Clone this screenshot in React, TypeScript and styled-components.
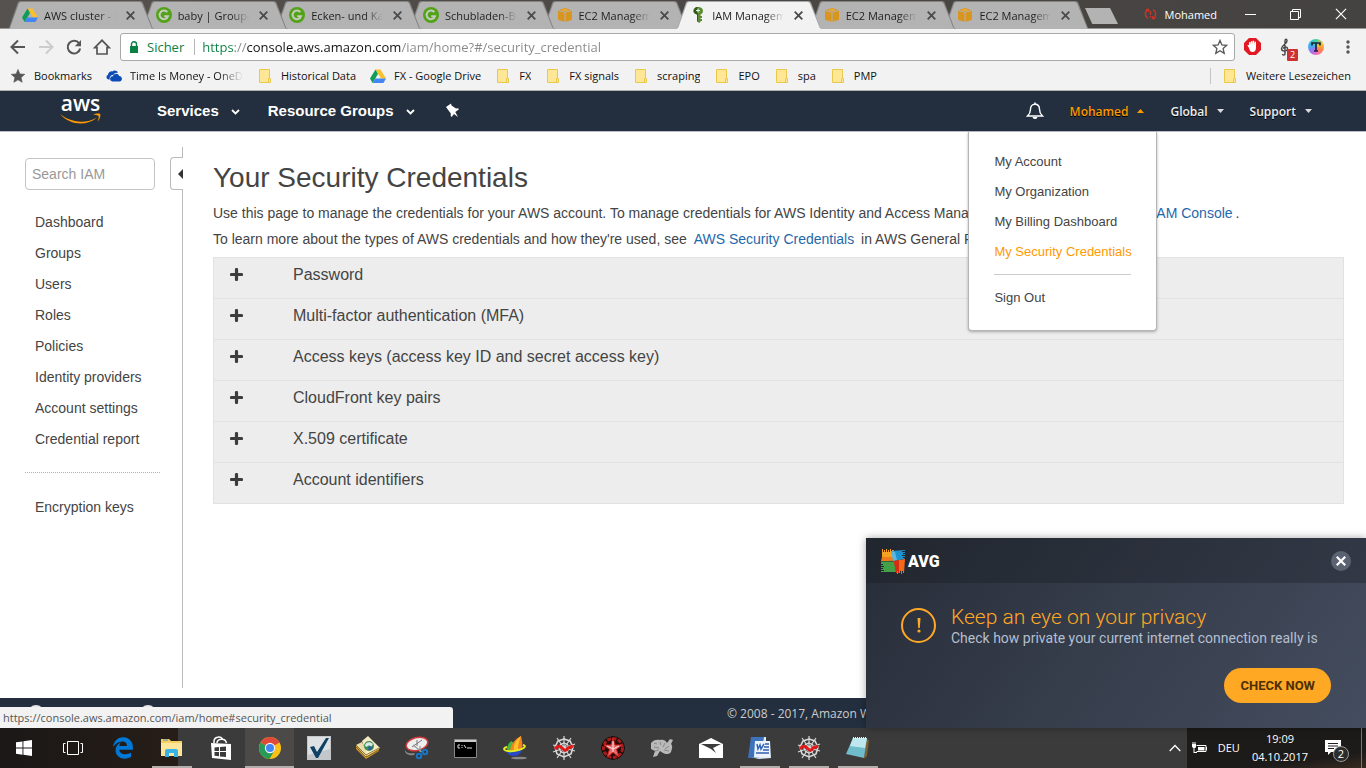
import React from 'react';
import styled, { createGlobalStyle, css } from 'styled-components';
import { FaEdgeLegacy } from 'react-icons/fa6';

const uiFont = '"Open Sans", "Noto Sans", sans-serif';
const pageFont = '"Liberation Sans", Arial, sans-serif';

const GlobalStyle = createGlobalStyle`
  *, *::before, *::after { box-sizing: border-box; }
  body { margin: 0; background: #fff; font-family: ${pageFont}; }
  button { font: inherit; color: inherit; background: none; border: 0; padding: 0; cursor: pointer; }
  a { color: inherit; text-decoration: none; }
  svg { display: block; flex: none; }
`;

const Screen = styled.div`
  min-height: 100vh;
  display: flex;
  flex-direction: column;
  overflow: hidden;
`;

/* ---------- Browser frame ---------- */

const TabStrip = styled.div`
  display: flex;
  height: 29px;
  padding: 1px 0 0 7px;
  background: linear-gradient(90deg, #55524f, #4a4744 50%, #454341);
  font: 11px ${uiFont};
  border-bottom: 1px solid #989694;
`;

const Tabs = styled.div`
  display: flex;
  flex: 0 1 1083px;
  min-width: 0;
  padding-right: 14px;
`;

const tabShape = css`
  content: '';
  position: absolute;
  inset: 0;
  z-index: -1;
  clip-path: polygon(0 100%, 2px 96%, 11px 4%, 13px 0, calc(100% - 14px) 0, calc(100% - 12px) 4%, calc(100% - 2px) 96%, 100% 100%);
`;

const Tab = styled.div<{ $active?: boolean; $order: number }>`
  position: relative;
  z-index: ${p => (p.$active ? 20 : 10 - p.$order)};
  display: flex;
  align-items: center;
  flex: 1 1 0;
  min-width: 0;
  height: 28px;
  margin-right: -14px;
  padding: 0 20px 0 15px;
  color: ${p => (p.$active ? '#222' : '#1f1f1f')};
  &::before { ${tabShape} background: ${p => (p.$active ? '#a8a8a8' : '#858381')}; }
  &::after { ${tabShape} inset: 1px 1px 0; background: ${p => (p.$active ? '#f2f2f2' : '#b3b3b3')}; }
`;

const TabTitle = styled.span`
  flex: 1;
  margin-left: 6px;
  overflow: hidden;
  white-space: nowrap;
  mask-image: linear-gradient(90deg, #000 75%, transparent);
`;

const TabClose = styled.button`
  display: flex;
  margin-left: 10px;
`;

const NewTab = styled.button`
  width: 33px;
  height: 16px;
  margin: 7px 0 0 -5px;
  background: #b3b3b3;
  clip-path: polygon(0 0, 76% 0, 100% 100%, 22% 100%);
`;

const WindowBar = styled.div`
  display: flex;
  align-items: center;
  height: 26px;
  margin-left: auto;
  padding-right: 19px;
  color: #fff;
`;

const ProfileName = styled.button`
  margin: 0 28px 0 8px;
  font: 11px ${uiFont};
`;

const WindowControls = styled.div`
  display: flex;
  gap: 34px;
`;

const Toolbar = styled.div`
  display: flex;
  align-items: center;
  height: 35px;
  padding: 0 9px;
  background: #f2f2f2;
`;

const NavButtons = styled.div`
  display: flex;
  align-items: center;
  gap: 10px;
  margin-right: 9px;
`;

const IconButton = styled.button`
  display: flex;
  align-items: center;
`;

const AddressBar = styled.form`
  display: flex;
  align-items: center;
  flex: 1;
  height: 28px;
  padding: 0 6px 0 8px;
  border: 1px solid #a9a9a9;
  border-radius: 3px;
  background: #fff;
  font: 13px ${uiFont};
`;

const Secure = styled.span`
  margin-left: 8px;
  padding-right: 10px;
  border-right: 1px solid #b5b5b5;
  color: #0b8043;
  line-height: 16px;
`;

const UrlInput = styled.input`
  flex: 1;
  min-width: 0;
  margin-left: 7px;
  padding: 0;
  border: 0;
  outline: 0;
  font: 13px ${uiFont};
  color: #222;
  -webkit-text-fill-color: transparent;
  background: linear-gradient(90deg, #0b8043 31px, #888 31px, #888 45px, #111 45px, #111 199px, #888 199px);
  -webkit-background-clip: text;
  background-clip: text;
`;

const Extensions = styled.div`
  display: flex;
  align-items: center;
  gap: 15px;
  margin-left: 9px;
`;

const ExtensionBadge = styled.span`
  position: absolute;
  right: -5px;
  bottom: -5px;
  width: 11px;
  height: 12px;
  border-radius: 1px;
  background: #d03030;
  color: #fff;
  font: 9px/12px ${uiFont};
  text-align: center;
`;

const BadgedButton = styled(IconButton)`
  position: relative;
`;

const HueButton = styled(IconButton)`
  width: 16px;
  height: 16px;
  border-radius: 50%;
  background: conic-gradient(#3fd0a0, #f4c63a 60deg, #ff8a3c 110deg, #f46cae 170deg, #a870f0 220deg, #35b6f2 290deg, #3fd0a0);
`;

const BookmarkBar = styled.nav`
  display: flex;
  align-items: center;
  height: 27px;
  padding: 0 15px 3px 10px;
  background: #f2f2f2;
  border-bottom: 1px solid #b0b0b0;
  font: 11px ${uiFont};
  color: #111;
`;

const Bookmark = styled.a<{ $width?: number }>`
  display: flex;
  align-items: center;
  gap: 8px;
  margin-right: 14px;
  white-space: nowrap;
  width: ${p => (p.$width ? `${p.$width}px` : 'auto')};
  overflow: hidden;
  ${p => p.$width && 'mask-image: linear-gradient(90deg, #000 82%, transparent);'}
`;

const OtherBookmarks = styled.div`
  margin-left: auto;
  padding-left: 11px;
  border-left: 1px solid #c4c4c4;
  ${Bookmark} { margin: 0; }
`;

/* ---------- AWS console header ---------- */

const ConsoleHeader = styled.header`
  display: flex;
  align-items: stretch;
  height: 41px;
  padding: 0 41px 0 60px;
  background: #232f3e;
  border-bottom: 1px solid #b9bec8;
  color: #fff;
`;

const AwsLogo = styled.a`
  width: 41px;
  margin-right: 56px;
  padding-top: 2px;
  font: 600 21px/20px "Open Sans", sans-serif;
  text-align: center;
`;

const ServiceButton = styled.button`
  display: flex;
  align-items: center;
  gap: 12px;
  margin-right: 28px;
  padding-bottom: 1px;
  font: bold 15px ${pageFont};
`;

const HeaderRight = styled.div`
  display: flex;
  align-items: stretch;
  margin-left: auto;
`;

const AccountItem = styled.div`
  position: relative;
  display: flex;
`;

const AccountButton = styled.button<{ $open?: boolean }>`
  display: flex;
  align-items: center;
  gap: 9px;
  padding: 0 13px;
  font: 600 12px ${uiFont};
  color: ${p => (p.$open ? '#f90' : '#eee')};
  text-shadow: 0 1px 0 #000;
`;

const BellButton = styled.button`
  display: flex;
  align-items: center;
  margin-right: 13px;
`;

const AccountMenu = styled.div`
  position: absolute;
  top: 41px;
  right: 0;
  z-index: 5;
  width: 189px;
  padding: 15px 25px 17px;
  background: #fff;
  border: 1px solid #b5b5b5;
  border-top: 0;
  border-radius: 0 0 4px 4px;
  box-shadow: 0 1px 3px rgba(0, 0, 0, 0.3);
  font-size: 13px;
  line-height: 30px;
  color: #444;
`;

const MenuLink = styled.a<{ $current?: boolean }>`
  display: block;
  white-space: nowrap;
  color: ${p => (p.$current ? '#f90' : '#444')};
`;

const MenuRule = styled.hr`
  margin: 7px 0 8px;
  border: 0;
  border-top: 1px solid #ccc;
`;

/* ---------- Page body ---------- */

const Body = styled.div`
  display: flex;
  flex: 1;
  color: #444;
`;

const Sidebar = styled.aside`
  position: relative;
  flex: none;
  width: 183px;
  margin: 15px 0 10px;
  padding: 11px 22px 0 25px;
  border-right: 1px solid #bbb;
  font-size: 14px;
`;

const SearchInput = styled.input`
  display: block;
  width: 130px;
  height: 32px;
  padding: 0 6px;
  border: 1px solid #c4c4c4;
  border-radius: 4px;
  font: 14px ${pageFont};
  &::placeholder { color: #999; }
`;

const CollapseHandle = styled.button`
  position: absolute;
  top: 10px;
  right: -1px;
  display: flex;
  align-items: center;
  justify-content: flex-end;
  width: 13px;
  height: 33px;
  border: 1px solid #bbb;
  border-right: 0;
  border-radius: 4px 0 0 4px;
  background: #fff;
`;

const SideList = styled.ul`
  list-style: none;
  margin: 17px 0 0;
  padding: 0 0 17px 10px;
  line-height: 31px;
  & + & {
    margin: 0;
    padding-top: 19px;
    border-top: 1px dotted #b0b0b0;
  }
`;

const Content = styled.main`
  flex: 1;
  min-width: 0;
  padding: 29px 22px 0 30px;
`;

const Title = styled.h1`
  margin: 0 0 5px;
  font-size: 28px;
  font-weight: normal;
  line-height: 34px;
`;

const Intro = styled.p`
  margin: 0;
  font-size: 14px;
  line-height: 26px;
  white-space: nowrap;
`;

const TextLink = styled.a`
  margin: 0 3px;
  color: #1f68ac;
`;

const Accordion = styled.div`
  margin-top: 5px;
  border: 1px solid #e2e2e2;
  border-top: 0;
  background: #ededed;
`;

const AccordionRow = styled.button`
  display: flex;
  align-items: flex-start;
  gap: 50px;
  width: 100%;
  padding: 7px 16px 13px;
  border-top: 1px solid #e2e2e2;
  font-size: 16px;
  line-height: 20px;
  text-align: left;
  svg { margin-top: 3px; }
`;

const BottomArea = styled.div`
  position: relative;
`;

const Footer = styled.footer`
  display: flex;
  align-items: center;
  height: 30px;
  padding-left: 28px;
  background: #232f3e;
  color: #ccc;
  font: 12px ${uiFont};
`;

const FooterLink = styled.a`
  width: 112px;
`;

const Copyright = styled.span`
  margin-left: 475px;
  white-space: nowrap;
`;

const StatusBubble = styled.div`
  position: absolute;
  left: 0;
  bottom: 0;
  width: 453px;
  height: 21px;
  padding-left: 3px;
  border-radius: 0 3px 0 0;
  background: #f2f2f2;
  color: #555;
  font: 11px/21px ${uiFont};
`;

/* ---------- Antivirus notification ---------- */

const Toast = styled.section`
  position: absolute;
  right: 0;
  bottom: 0;
  width: 500px;
  height: 190px;
  background: linear-gradient(125deg, #272d38, #353c4a 45%, #444d5f);
  box-shadow: 0 0 8px rgba(0, 0, 0, 0.35);
  font-family: Roboto, sans-serif;
`;

const ToastHeader = styled.div`
  display: flex;
  align-items: center;
  gap: 2px;
  height: 45px;
  padding: 1px 15px 0;
  background: rgba(20, 22, 26, 0.3);
  color: #fff;
  font-size: 16px;
  font-weight: 900;
`;

const ToastClose = styled.button`
  display: flex;
  align-items: center;
  justify-content: center;
  width: 20px;
  height: 20px;
  margin-left: auto;
  border-radius: 50%;
  background: #5b6271;
`;

const ToastBody = styled.div`
  display: flex;
  gap: 15px;
  padding: 23px 35px 0;
`;

const ToastTitle = styled.h2`
  margin: 0;
  color: #ffa726;
  font-size: 21px;
  font-weight: 300;
  line-height: 23px;
`;

const ToastText = styled.p`
  margin: 0;
  color: #b4bfd1;
  font-size: 14px;
  line-height: 18px;
`;

const ToastAction = styled.button`
  display: block;
  height: 35px;
  margin: 21px 35px 0 auto;
  padding: 0 16px;
  border-radius: 18px;
  background: #ffa823;
  color: #4d2f04;
  font-size: 13px;
  font-weight: 700;
`;

/* ---------- Windows task bar ---------- */

const TaskBar = styled.div`
  display: flex;
  height: 40px;
  background: linear-gradient(90deg, #1b1817 0, #261d17 178px, #3b3b3b 178px);
  color: #fff;
  font: 11px/18px ${uiFont};
`;

const TaskButton = styled.button<{ $width?: number; $running?: boolean; $focused?: boolean }>`
  position: relative;
  display: flex;
  align-items: center;
  justify-content: center;
  flex: 0 1 ${p => p.$width || 49}px;
  background: ${p => (p.$focused ? '#4b4a49' : 'transparent')};
  &::after {
    content: '';
    position: absolute;
    bottom: 0;
    left: ${p => (p.$focused ? 0 : 5)}px;
    right: ${p => (p.$focused ? 0 : 4)}px;
    height: ${p => (p.$running || p.$focused ? 2 : 0)}px;
    background: #b3adab;
  }
`;

const TrayToggle = styled.button`
  display: flex;
  align-items: center;
  margin-left: auto;
  padding-right: 6px;
`;

const Tray = styled.div`
  display: flex;
  align-items: center;
  padding: 0 4px;
  background: linear-gradient(172deg, #1d1b1a 75%, #382a20);
`;

const Language = styled.button`
  margin: 0 12px 0 11px;
`;

const Clock = styled.time`
  text-align: center;
`;

const ActionCenter = styled.button`
  position: relative;
  display: flex;
  margin: 0 19px 0 17px;
`;

const Count = styled.span`
  position: absolute;
  left: 8px;
  top: 6px;
  width: 16px;
  height: 16px;
  border: 1px solid #999;
  border-radius: 50%;
  background: #2c2c2c;
  font: 11px/14px ${uiFont};
  text-align: center;
`;

const ShowDesktop = styled.button`
  width: 1px;
  height: 40px;
  background: #777;
`;

/* ---------- Drawings ---------- */

const DriveIcon = ({ size = 16 }: { size?: number }) => (
  <svg width={size} height={size} viewBox="0 0 16 16">
    <path d="M5.5 1.5h5L16 10.500h-5z" fill="#fbc02d" />
    <path d="M5.500 1.500 8 6 2.600 15 0 10.500z" fill="#0f9d58" />
    <path d="M5.300 10.500H16L13.400 15H2.600z" fill="#4285f4" />
  </svg>
);

const GrouponIcon = () => (
  <svg width="16" height="16" viewBox="0 0 16 16">
    <circle cx="8" cy="8" r="8" fill="#53a318" />
    <path d="M11.300 5.200A4.300 4.300 0 1 0 12 9.200H8.200" fill="none" stroke="#c6ccc0" strokeWidth="2" />
  </svg>
);

const CubeIcon = () => (
  <svg width="16" height="16" viewBox="0 0 16 16">
    <path d="M1 3.200 8 1l7 2.200v9.600L8 15l-7-2.200z" fill="#d9961f" />
    <path d="m1 3.200 7 2.200 7-2.200M8 5.400V15" fill="none" stroke="#b3b3b3" strokeWidth="1" />
    <path d="M4 3 8 1.500 12 3 8 4.500z" fill="#e8a93a" />
  </svg>
);

const KeyIcon = () => (
  <svg width="16" height="16" viewBox="0 0 16 16">
    <path d="M8 0c3 0 5 1.600 5 4 0 1.900-1.200 3-2.500 3.500V9H12v2h-1.500v1H12v2h-1.500v1L9 16l-2-2V7.500C5 7 3.500 5.900 3.500 4S5 0 8 0z" fill="#5b8c35" />
    <path d="M7 7.500C5 7 3.500 5.900 3.500 4S5 0 8 0v15l-1-1z" fill="#2f5a1c" />
    <path d="M8 1.500v4M6 3.500h4" stroke="#e6efe0" strokeWidth="1.200" />
  </svg>
);

const CrossIcon = ({ size = 9, color = '#4a4a4a', weight = 1.8 }: { size?: number; color?: string; weight?: number }) => (
  <svg width={size} height={size} viewBox="0 0 9 9">
    <path d="m.700.700 7.600 7.600m0-7.600L.700 8.300" stroke={color} strokeWidth={weight} />
  </svg>
);

const FolderIcon = () => (
  <svg width="16" height="16" viewBox="0 0 16 16">
    <path d="M2.500 1.500h10v9h1v4h-11z" fill="#ffe795" stroke="#e9c84e" />
    <path d="M11.500 14v-3.500h1" fill="none" stroke="#e9c84e" />
  </svg>
);

const StarIcon = ({ filled = false }: { filled?: boolean }) => (
  <svg width="16" height="16" viewBox="0 0 16 16">
    <path
      d="m8 1.400 1.900 4.500 4.900.400-3.700 3.200 1.100 4.800L8 11.800l-4.200 2.500 1.100-4.800L1.200 6.300l4.900-.400z"
      fill={filled ? '#555' : 'none'}
      stroke="#555"
      strokeWidth={filled ? 0.6 : 1.3}
    />
  </svg>
);

const OneDriveIcon = () => (
  <svg width="16" height="16" viewBox="0 0 16 16">
    <path d="M3.800 11.500H2.500A2.500 2.500 0 0 1 2 6.700C2.200 4.300 4.500 3 6.500 3.400 8 1.900 11.200 2.400 12 5 9.500 4.300 7.800 5.600 7.300 7 5 6.800 3.200 9 3.800 11.500z" fill="#0b4db5" />
    <path d="M6.500 13.500a2.600 2.600 0 0 1 .4-5.200c.6-3 5-3.600 6.300-.4 3.200.100 3.800 4.800.8 5.600z" fill="#0b4db5" />
  </svg>
);

const CaretIcon = ({ up = false }: { up?: boolean }) => (
  <svg width="7" height="4" viewBox="0 0 7 4">
    <path d={up ? 'M0 4h7L3.500 0z' : 'M0 0h7L3.500 4z'} fill={up ? '#f90' : '#ddd'} />
  </svg>
);

const ChevronIcon = () => (
  <svg width="9" height="12" viewBox="0 0 9 12">
    <path d="m1 5 3.500 3.400L8 5" fill="none" stroke="#fff" strokeWidth="1.800" />
  </svg>
);

const PlusIcon = () => (
  <svg width="13" height="13" viewBox="0 0 13 13">
    <path d="M6.500 1.500v10M1.500 6.500h10" stroke="#3c3c3c" strokeWidth="3.200" strokeLinecap="round" />
  </svg>
);

const ShieldAvg = () => (
  <svg width="25" height="25" viewBox="0 0 25 25">
    <path d="M1 0h1v3h1V1h1v2h1V0h1v3h1V1h1v2h1V0h1v3h1V1h2l-1 3 1 7.500-12 .5z" fill="#f6a11f" />
    <path d="M1 8h10l1.500 3.500L0 12z" fill="#f07a1c" />
    <path d="m10 2 14-1v1h-3v1h3v1h-2v1h2v1h-3v1h3v1h-2v1h1l1 1-11 2z" fill="#1c93cf" />
    <path d="m10 2 4 1 2 8-4 1z" fill="#5fb6dd" />
    <path d="M0 12.500h13l2 10.500H0v-1h3v-1H0v-1h2v-1H0v-1h3v-1H0v-1h2v-1H0z" fill="#43a047" />
    <path d="m13 12 11-2-1 14h-1v-2h-1v3h-1v-3h-1v2h-1v-2h-1v3h-1v-2h-1z" fill="#f4681c" />
    <path d="m13 12 5-1v13h-1v-2h-1v2h-1z" fill="#d62c12" />
  </svg>
);

const FileExplorerIcon = () => (
  <svg width="23" height="20" viewBox="0 0 23 20">
    <path d="M1 1h8l2 2h11v15H1z" fill="#f3cf62" />
    <path d="M1 5h21v13H1z" fill="#fde59a" />
    <path d="M3 2h5" stroke="#4b8bd0" />
    <path d="M5 19v-6a2 2 0 0 1 2-2h9a2 2 0 0 1 2 2v6h-4v-4H9v4z" fill="#36b3e8" />
  </svg>
);

const StoreIcon = () => (
  <svg width="24" height="25" viewBox="0 0 24 25">
    <path d="M5 7V5.500c0-5 7-6 9-1.500M8 7c0-4 8-6 9.500 0" fill="none" stroke="#fff" strokeWidth="1.500" />
    <path d="M2 7 22 8v16L3 22z" fill="#fff" />
    <path d="M5.500 11.500 10 11v4H5.500zM11 11l6-.500V15h-6zM5.500 16H10v4.300l-4.500-.500zM11 16h6v5l-6-.600z" fill="#3b3b3b" />
  </svg>
);

const ChromeIcon = () => (
  <svg width="22" height="22" viewBox="0 0 22 22">
    <circle cx="11" cy="11" r="11" fill="#fbc116" />
    <path d="M11 11 1.500 5.500a11 11 0 0 1 19 0z" fill="#df4a3b" />
    <path d="M11 11 1.500 5.500A11 11 0 0 0 10.500 22l5-8.500z" fill="#279b56" />
    <path d="M11 6h9.800a11 11 0 0 0-.3-.500L11 5z" fill="#df4a3b" />
    <circle cx="11" cy="11" r="5.200" fill="#f3f3f3" />
    <circle cx="11" cy="11" r="4" fill="#4285f4" />
  </svg>
);

const CheckIcon = () => (
  <svg width="24" height="24" viewBox="0 0 24 24">
    <path d="M0 0h24v24H0z" fill="#c3c7ca" />
    <path d="M1 1h22v12L1 19z" fill="#dee1e3" />
    <path d="m3 11 4-1 3 6L19 2h3L11 22H9z" fill="#0d4266" />
  </svg>
);

const CoinBoxIcon = () => (
  <svg width="25" height="24" viewBox="0 0 25 24">
    <path d="M1 9v4l10 10 13-8v-3z" fill="#c9962b" />
    <path d="m1 9 6-3 5 12-1 3z" fill="#e9dcab" />
    <path d="m7 5 6-5 12 12-13 8z" fill="#f5ecc6" />
    <path d="m1 11 10 10 13-7M1 9l10 10 13-7" fill="none" stroke="#7c5a14" strokeWidth=".8" />
    <circle cx="14" cy="10" r="5" fill="#3f8f52" />
    <path d="M10 10c0-4 5-5 8-2l-2 3c-1-2-3-2-4 0z" fill="#d8e8ee" />
    <path d="m13 14 1-4 4 1-2 3z" fill="#2c5fa0" />
  </svg>
);

const SnippingIcon = () => (
  <svg width="25" height="24" viewBox="0 0 25 24">
    <path d="M1 13c0 4 5 5 10 4l-1 2C5 20 0 18 1 13z" fill="#888" />
    <ellipse cx="13" cy="8" rx="11" ry="6.500" transform="rotate(-14 13 8)" fill="#eee" stroke="#d33b3b" strokeWidth="1.500" />
    <path d="m8 11 10-7m-5 0v6" stroke="#777" />
    <path d="m9 9 9 7m-2-6v6" stroke="#999" strokeWidth="1.200" />
    <circle cx="15" cy="20" r="2.300" fill="none" stroke="#1675c4" strokeWidth="2" />
    <circle cx="21" cy="16" r="2.300" fill="none" stroke="#1675c4" strokeWidth="2" />
  </svg>
);

const TerminalIcon = () => (
  <svg width="23" height="19" viewBox="0 0 23 19">
    <path d="M.500.500h22v18H.500z" fill="#000" stroke="#888" />
    <path d="M1 1h21v2H1z" fill="#ccc" />
    <path d="M6 6H4v3h2M8 6v1m0 1v1m2-3 2 3m1 0h5" fill="none" stroke="#ddd" />
  </svg>
);

const SailIcon = () => (
  <svg width="26" height="24" viewBox="0 0 26 24">
    <ellipse cx="17" cy="22" rx="8" ry="1.300" fill="#888" />
    <path d="M4 15c2 6 13 8 16-1z" fill="#2a48c8" />
    <path d="M9 5C5 9 3 14 8 17l6-2 1-6z" fill="#41b943" />
    <path d="M19 0C13 3 9 8 8 14l12 0c1-5 0-10-1-14z" fill="#f58220" />
    <path d="M19 0c-5 4-8 9-7 14h4c0-5 1-9 3-14z" fill="#fdc228" />
    <path d="M5 11c-5 1-4 5 6 4s15-5 10-6" fill="none" stroke="#e6ed21" strokeWidth="1.800" />
  </svg>
);

const WebIcon = () => (
  <svg width="24" height="24" viewBox="0 0 24 24">
    <g fill="none" stroke="#d8d8d8" strokeWidth="1.200">
      <path d="M12 0v24M1 9l22 6M5 2l14 20M19 2 5 22M1 16l22-8" />
      <path d="m12 3 6 2 3 6-2 7-7 3-7-3-2-7 3-6z" strokeWidth="1.600" />
      <path d="m12 7 3.500 1.500L17 12l-1.500 3.500L12 17l-3.500-1.500L7 12l1.500-3.500z" />
    </g>
    <path d="M3 13c3-4 5-3 7-1s4 4 6 0l5-2" fill="none" stroke="#e31818" strokeWidth="3" />
  </svg>
);

const RedStarIcon = () => (
  <svg width="24" height="24" viewBox="0 0 24 24">
    <circle cx="12" cy="12" r="11.300" fill="#230b0b" stroke="#120505" />
    <circle cx="12" cy="12" r="9.500" fill="none" stroke="#a91c1c" strokeWidth="3" strokeDasharray="4 1.500" />
    <path d="m12 2 2 7h7l-5.500 4.500L18 21l-6-4.500L6 21l2.500-7.500L3 9h7z" fill="#e86a6a" stroke="#d01f1f" />
    <path d="M12 5v11M6 10l6 3 6-3" stroke="#fff" strokeWidth=".8" fill="none" />
  </svg>
);

const GearCloudIcon = () => (
  <svg width="24" height="20" viewBox="0 0 24 20">
    <path d="M1 5c2-3 6-4 9-3 4-1 6 1 7 3l3-4 3 1-2 4c2 2 1 5 0 8-2 3-6 2-8 1l-3-2-3 5-4 1 2-6-4-2z" fill="#b9b9b9" />
    <path d="m4 5 3 1m3-2 1 3m4-2-2 4m6-1-4 3m4 2-5-1M4 9l5 1m-4 3 4-1" stroke="#888" strokeWidth="1" />
  </svg>
);

const MailIcon = () => (
  <svg width="24" height="20" viewBox="0 0 24 20">
    <path d="M0 6 12 0l12 6v14H0z" fill="#fff" />
    <path d="M2 6h20l-8 4 3 5-5-4z" fill="#3b3b3b" />
  </svg>
);

const WordIcon = () => (
  <svg width="23" height="23" viewBox="0 0 23 23">
    <path d="M5 0h13v4h4l1 17-12 1-9-2z" fill="#dfe9f7" />
    <path d="M3 0h13l-3 20-13 1z" fill="#3d73bd" />
    <path d="M7 4h15v16H6z" fill="#eef3fb" />
    <path d="m9 7 1 5 2-4 1 4 3-5" fill="none" stroke="#2f67b8" strokeWidth="1.500" />
    <path d="M17 7h4M16 10h5M15 13h6M8 16h13" stroke="#2f5fae" strokeWidth="1.500" />
  </svg>
);

const NotepadIcon = () => (
  <svg width="23" height="22" viewBox="0 0 23 22">
    <path d="m20 2 3 1-2 16-3 3z" fill="#7d6130" />
    <path d="M7 1h14l-3 20L0 17z" fill="#6fbccb" />
    <path d="M7 1h14l-2 10L4 9z" fill="#bfe8ee" />
    <path d="M7 1h14" stroke="#eee" strokeWidth="2" strokeDasharray="1 1" />
  </svg>
);

/* ---------- Data ---------- */

const tabs = [
  { title: 'AWS cluster - Google', icon: <DriveIcon /> },
  { title: 'baby | Groupon', icon: <GrouponIcon /> },
  { title: 'Ecken- und Kanten', icon: <GrouponIcon /> },
  { title: 'Schubladen-Box', icon: <GrouponIcon /> },
  { title: 'EC2 Management', icon: <CubeIcon /> },
  { title: 'IAM Management', icon: <KeyIcon />, active: true },
  { title: 'EC2 Management', icon: <CubeIcon /> },
  { title: 'EC2 Management', icon: <CubeIcon /> },
];

const bookmarks = [
  { label: 'Bookmarks', icon: <StarIcon filled /> },
  { label: 'Time Is Money - OneDrive', icon: <OneDriveIcon />, width: 137 },
  { label: 'Historical Data', icon: <FolderIcon /> },
  { label: 'FX - Google Drive', icon: <DriveIcon /> },
  { label: 'FX', icon: <FolderIcon /> },
  { label: 'FX signals', icon: <FolderIcon /> },
  { label: 'scraping', icon: <FolderIcon /> },
  { label: 'EPO', icon: <FolderIcon /> },
  { label: 'spa', icon: <FolderIcon /> },
  { label: 'PMP', icon: <FolderIcon /> },
];

const sideLinks = ['Dashboard', 'Groups', 'Users', 'Roles', 'Policies', 'Identity providers', 'Account settings', 'Credential report'];

const sections = [
  'Password',
  'Multi-factor authentication (MFA)',
  'Access keys (access key ID and secret access key)',
  'CloudFront key pairs',
  'X.509 certificate',
  'Account identifiers',
];

const apps = [
  { name: 'Edge', icon: <FaEdgeLegacy size={22} color="#0078d7" /> },
  { name: 'Explorer', icon: <FileExplorerIcon />, running: true },
  { name: 'Store', icon: <StoreIcon /> },
  { name: 'Chrome', icon: <ChromeIcon />, focused: true },
  { name: 'Tasks', icon: <CheckIcon /> },
  { name: 'Library', icon: <CoinBoxIcon /> },
  { name: 'Snipping Tool', icon: <SnippingIcon /> },
  { name: 'Command Prompt', icon: <TerminalIcon /> },
  { name: 'Sail', icon: <SailIcon /> },
  { name: 'Spider', icon: <WebIcon /> },
  { name: 'Star', icon: <RedStarIcon /> },
  { name: 'Tools', icon: <GearCloudIcon /> },
  { name: 'Mail', icon: <MailIcon /> },
  { name: 'Word', icon: <WordIcon />, running: true },
  { name: 'Spider session', icon: <WebIcon />, running: true },
  { name: 'Notepad', icon: <NotepadIcon />, running: true },
];

/* ---------- Sections ---------- */

const BrowserFrame = () => (
  <>
    <TabStrip>
      <Tabs>
        {tabs.map((tab, i) => (
          <Tab key={i} $active={tab.active} $order={i}>
            {tab.icon}
            <TabTitle>{tab.title}</TabTitle>
            <TabClose aria-label="Close tab"><CrossIcon /></TabClose>
          </Tab>
        ))}
      </Tabs>
      <NewTab aria-label="New tab" />
      <WindowBar>
        <svg width="13" height="12" viewBox="0 0 13 12">
          <path d="M4 1.500C.500 3 .500 8.500 4 10.500M2 1.500h2.500V4M9 10.500c3.500-1.500 3.500-7 0-9M11 10.500H8.500V8" fill="none" stroke="#c5372c" strokeWidth="1.400" />
          <path d="M6.500 3v4m0 1v1.500" stroke="#c5372c" strokeWidth="1.400" />
        </svg>
        <ProfileName>Mohamed</ProfileName>
        <WindowControls>
          <IconButton aria-label="Minimize">
            <svg width="11" height="11" viewBox="0 0 11 11"><path d="M0 5.500h11" stroke="#fff" /></svg>
          </IconButton>
          <IconButton aria-label="Restore">
            <svg width="11" height="11" viewBox="0 0 11 11"><path d="M.500 2.500h8v8h-8zM2.500 2V.500h8v8H9" fill="none" stroke="#fff" /></svg>
          </IconButton>
          <IconButton aria-label="Close"><CrossIcon size={12} color="#fff" weight={0.9} /></IconButton>
        </WindowControls>
      </WindowBar>
    </TabStrip>
    <Toolbar>
      <NavButtons>
        <IconButton aria-label="Back">
          <svg width="18" height="18" viewBox="0 0 18 18"><path d="M16 9H3m6-6.500L2.500 9 9 15.500" fill="none" stroke="#555" strokeWidth="2" /></svg>
        </IconButton>
        <IconButton aria-label="Forward">
          <svg width="18" height="18" viewBox="0 0 18 18"><path d="M2 9h13M9 2.500 15.500 9 9 15.500" fill="none" stroke="#ccc" strokeWidth="2" /></svg>
        </IconButton>
        <IconButton aria-label="Reload">
          <svg width="18" height="18" viewBox="0 0 18 18">
            <path d="M14.200 5.500A6.300 6.300 0 1 0 15.200 10.500" fill="none" stroke="#555" strokeWidth="2" />
            <path d="M16 2v6.200H9.800z" fill="#555" />
          </svg>
        </IconButton>
        <IconButton aria-label="Home">
          <svg width="18" height="18" viewBox="0 0 18 18"><path d="M1.800 9.700 9 2.300l7.200 7.400H14v6.300H4V9.700z" fill="none" stroke="#555" strokeWidth="1.700" /></svg>
        </IconButton>
      </NavButtons>
      <AddressBar onSubmit={e => e.preventDefault()}>
        <svg width="10" height="12" viewBox="0 0 10 12">
          <path d="M1 5h8v7H1z" fill="#0b8043" />
          <path d="M2.500 5V3.200a2.500 2.500 0 0 1 5 0V5" fill="none" stroke="#0b8043" strokeWidth="1.400" />
        </svg>
        <Secure>Sicher</Secure>
        <UrlInput aria-label="Address" defaultValue="https://console.aws.amazon.com/iam/home?#/security_credential" />
        <IconButton type="button" aria-label="Bookmark this page"><StarIcon /></IconButton>
      </AddressBar>
      <Extensions>
        <IconButton aria-label="Ad blocker">
          <svg width="17" height="17" viewBox="0 0 17 17">
            <path d="M5 0h7l5 5v7l-5 5H5l-5-5V5z" fill="#e01923" />
            <path d="M5 10 3.500 7.500c0-1 1-1 1.500-.300V4.500a.8.8 0 0 1 1.500 0V7l.300-3.500a.8.8 0 0 1 1.500 0V7l.400-4a.8.8 0 0 1 1.500 0v4l.400-3a.8.8 0 0 1 1.400 0v5.500c0 2.500-1 4.500-3.300 4.500S6 13 5 10z" fill="#fff" />
          </svg>
        </IconButton>
        <BadgedButton aria-label="Music">
          <svg width="17" height="18" viewBox="0 0 17 18">
            <path d="M9 16V3c0-2 2-2.500 2 0 0 3-5.500 4-5.500 7.500 0 3.500 6 3.500 6 .200 0-2.500-4-2.500-4 0M9 16c0 1.500-2.500 1.500-2.500 0" fill="none" stroke="#444" strokeWidth="1.400" />
          </svg>
          <ExtensionBadge>2</ExtensionBadge>
        </BadgedButton>
        <HueButton aria-label="Translate">
          <svg width="16" height="16" viewBox="0 0 16 16">
            <path d="M4 6.500V4h8v2.500M8 4v8M6 12h4" fill="none" stroke="#1c2340" strokeWidth="1.700" />
          </svg>
        </HueButton>
        <IconButton aria-label="Menu">
          <svg width="18" height="16" viewBox="0 0 18 16"><g fill="#555"><circle cx="9" cy="3" r="1.700" /><circle cx="9" cy="8" r="1.700" /><circle cx="9" cy="13" r="1.700" /></g></svg>
        </IconButton>
      </Extensions>
    </Toolbar>
    <BookmarkBar aria-label="Bookmarks">
      {bookmarks.map(b => (
        <Bookmark key={b.label} href="#" $width={b.width}>{b.icon}{b.label}</Bookmark>
      ))}
      <OtherBookmarks>
        <Bookmark href="#"><FolderIcon />Weitere Lesezeichen</Bookmark>
      </OtherBookmarks>
    </BookmarkBar>
  </>
);

const AwsHeader = () => (
  <ConsoleHeader>
    <AwsLogo href="#">
      aws
      <svg width="41" height="12" viewBox="0 0 42 12">
        <path d="M0 1c12 9.500 27 10 38 3.500C27 14 10 12.500 0 1z" fill="#f90" />
        <path d="M34 1.500c3-1.500 5.500-1.300 7.300-.700.400 2.700-.8 5.700-2.800 7.700.700-2.200 1.500-4.300 1.100-5.600-1.300-.8-3.400-.9-5.600-1.400z" fill="#f90" />
      </svg>
    </AwsLogo>
    <ServiceButton>Services <ChevronIcon /></ServiceButton>
    <ServiceButton>Resource Groups <ChevronIcon /></ServiceButton>
    <IconButton aria-label="Pin">
      <svg width="16" height="16" viewBox="2 0 16 16">
        <path d="m5 4 5-3.500.500 2 4.500 3 2-.200 1 1-3.700 2.700L17 14l-4-3-2.500 3-.800-1 .100-2.500-3-4z" fill="#fff" />
      </svg>
    </IconButton>
    <HeaderRight>
      <BellButton aria-label="Notifications">
        <svg width="18" height="18" viewBox="0 0 18 18">
          <path d="M9 2.200c-3 0-4.500 2.300-4.500 5 0 4-1.500 5.300-3 6.800h15c-1.500-1.500-3-2.800-3-6.800 0-2.700-1.500-5-4.500-5z" fill="none" stroke="#fff" strokeWidth="1.400" />
          <path d="M9 2V.500" stroke="#fff" strokeWidth="1.600" />
          <path d="M6.500 15h5a2.500 2 0 0 1-5 0z" fill="#fff" />
        </svg>
      </BellButton>
      <AccountItem>
        <AccountButton $open aria-expanded="true">Mohamed <CaretIcon up /></AccountButton>
        <AccountMenu>
          <MenuLink href="#">My Account</MenuLink>
          <MenuLink href="#">My Organization</MenuLink>
          <MenuLink href="#">My Billing Dashboard</MenuLink>
          <MenuLink href="#" $current>My Security Credentials</MenuLink>
          <MenuRule />
          <MenuLink href="#">Sign Out</MenuLink>
        </AccountMenu>
      </AccountItem>
      <AccountButton>Global <CaretIcon /></AccountButton>
      <AccountButton>Support <CaretIcon /></AccountButton>
    </HeaderRight>
  </ConsoleHeader>
);

const AvgToast = () => (
  <Toast aria-label="AVG">
    <ToastHeader>
      <ShieldAvg />AVG
      <ToastClose aria-label="Dismiss"><CrossIcon size={10} color="#fff" weight={2} /></ToastClose>
    </ToastHeader>
    <ToastBody>
      <svg width="35" height="39" viewBox="0 0 35 39">
        <circle cx="17.500" cy="19.500" r="16.500" fill="none" stroke="#ffa726" strokeWidth="2" />
        <path d="M16.500 12h3l-.700 10h-1.600z" fill="#ffa726" />
        <circle cx="18" cy="25" r="1.600" fill="#ffa726" />
      </svg>
      <div>
        <ToastTitle>Keep an eye on your privacy</ToastTitle>
        <ToastText>Check how private your current internet connection really is</ToastText>
      </div>
    </ToastBody>
    <ToastAction>CHECK NOW</ToastAction>
  </Toast>
);

const WindowsTaskBar = () => (
  <TaskBar>
    <TaskButton $width={48} aria-label="Start">
      <svg width="16" height="16" viewBox="0 0 16 16"><path d="M0 2.300 6.500 1.400v6.200H0zM7.400 1.200 16 0v7.600H7.400zM0 8.500h6.500v6.200L0 13.800zM7.400 8.500H16V16l-8.600-1.200z" fill="#fff" /></svg>
    </TaskButton>
    <TaskButton $width={50} aria-label="Task view">
      <svg width="20" height="14" viewBox="0 0 20 14"><path d="M4.500.500h11v13h-11zM2.500 2.500h-2v9h2M17.500 2.500h2v9h-2" fill="none" stroke="#fff" /></svg>
    </TaskButton>
    {apps.map(app => (
      <TaskButton key={app.name} $running={app.running} $focused={app.focused} aria-label={app.name}>{app.icon}</TaskButton>
    ))}
    <TrayToggle aria-label="Show hidden icons">
      <svg width="12" height="8" viewBox="0 0 12 8"><path d="m.700 7 5.300-5.500L11.300 7" fill="none" stroke="#fff" strokeWidth="1.300" /></svg>
    </TrayToggle>
    <Tray>
      <svg width="16" height="12" viewBox="0 0 16 12">
        <path d="M4.500 5.500v-2M5.500 3.500H15v6H5.500" fill="none" stroke="#fff" />
        <path d="M7 5h6.500v3.500H7zM15 5h1v3h-1zM1 2h4v2.500L4 6H2L1 4.500zM1.500 0h1v2h-1zM3.500 0h1v2h-1zM2.500 6h1v5h-1zM3 10h3v1H3z" fill="#fff" />
      </svg>
      <Language>DEU</Language>
      <Clock>19:09<br />04.10.2017</Clock>
      <ActionCenter aria-label="Notifications">
        <svg width="17" height="16" viewBox="0 0 17 16">
          <path d="M0 0h16v12H6l-3 3v-3H0z" fill="#fff" />
          <path d="M3 3.500h10M3 6h10M3 8.500h6" stroke="#222" />
        </svg>
        <Count>2</Count>
      </ActionCenter>
      <ShowDesktop aria-label="Show desktop" />
    </Tray>
  </TaskBar>
);

export default function App() {
  return (
    <Screen>
      <GlobalStyle />
      <BrowserFrame />
      <AwsHeader />
      <Body>
        <Sidebar>
          <SearchInput type="text" placeholder="Search IAM" aria-label="Search IAM" />
          <CollapseHandle aria-label="Collapse sidebar">
            <svg width="5" height="10" viewBox="0 0 5 10"><path d="M5 0v10L0 5z" fill="#333" /></svg>
          </CollapseHandle>
          <SideList>
            {sideLinks.map(s => <li key={s}><a href="#">{s}</a></li>)}
          </SideList>
          <SideList>
            <li><a href="#">Encryption keys</a></li>
          </SideList>
        </Sidebar>
        <Content>
          <Title>Your Security Credentials</Title>
          <Intro>
            Use this page to manage the credentials for your AWS account. To manage credentials for AWS Identity and Access Management (IAM) users, use the <TextLink href="#">IAM Console</TextLink>.
          </Intro>
          <Intro>
            To learn more about the types of AWS credentials and how they're used, see <TextLink href="#">AWS Security Credentials</TextLink> in AWS General Reference.
          </Intro>
          <Accordion>
            {sections.map(s => (
              <AccordionRow key={s} aria-expanded="false"><PlusIcon />{s}</AccordionRow>
            ))}
          </Accordion>
        </Content>
      </Body>
      <BottomArea>
        <Footer>
          <FooterLink href="#" aria-label="Feedback">
            <svg width="16" height="16" viewBox="0 0 16 16"><circle cx="8" cy="8" r="8" fill="#e6e6e6" /></svg>
          </FooterLink>
          <FooterLink href="#" aria-label="Language">
            <svg width="16" height="16" viewBox="0 0 16 16"><circle cx="8" cy="8" r="8" fill="#e6e6e6" /></svg>
          </FooterLink>
          <Copyright>© 2008 - 2017, Amazon Web Services, Inc.</Copyright>
        </Footer>
        <StatusBubble>https://console.aws.amazon.com/iam/home#security_credential</StatusBubble>
        <AvgToast />
      </BottomArea>
      <WindowsTaskBar />
    </Screen>
  );
}
